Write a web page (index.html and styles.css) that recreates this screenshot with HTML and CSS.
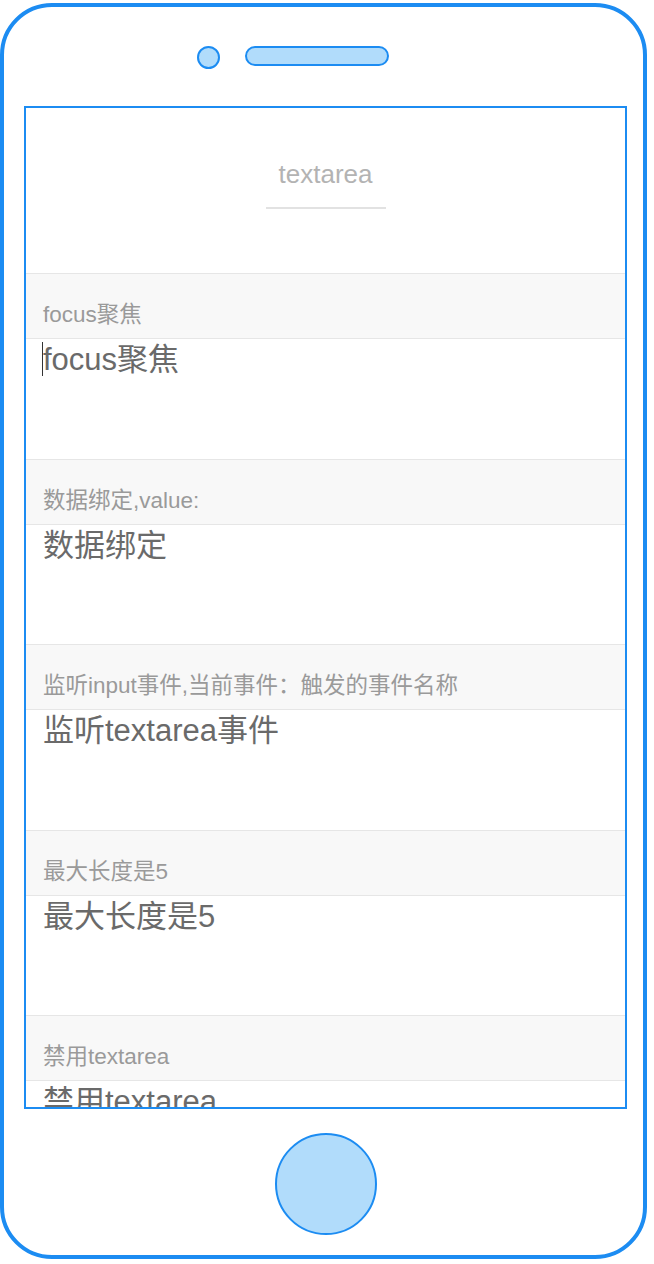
FILE: index.html
```html
<!DOCTYPE html>
<html lang="zh-CN">
<head>
<meta charset="utf-8">
<title>textarea</title>
<link rel="stylesheet" href="styles.css">
</head>
<body>
<div class="phone">
  <div class="top">
    <div class="camera"></div>
    <div class="speaker"></div>
  </div>
  <div class="screen">
    <div class="header">
      <div class="title">textarea</div>
    </div>
    <div class="section">
      <div class="label">focus聚焦</div>
      <div class="area"><span class="cursor"></span>focus聚焦</div>
    </div>
    <div class="section">
      <div class="label">数据绑定,value:</div>
      <div class="area">数据绑定</div>
    </div>
    <div class="section">
      <div class="label">监听input事件,当前事件：触发的事件名称</div>
      <div class="area">监听textarea事件</div>
    </div>
    <div class="section">
      <div class="label">最大长度是5</div>
      <div class="area">最大长度是5</div>
    </div>
    <div class="section">
      <div class="label">禁用textarea</div>
      <div class="area">禁用textarea</div>
    </div>
  </div>
  <div class="home"></div>
</div>
</body>
</html>
```
FILE: styles.css
```css
html, body {
  margin: 0;
  padding: 0;
  background: #ffffff;
}
body {
  font-family: "Liberation Sans", "Noto Sans CJK SC", sans-serif;
}
.phone {
  box-sizing: border-box;
  width: 647px;
  height: 1256px;
  margin-top: 3px;
  border: 4px solid #1c8cf2;
  border-radius: 52px;
  display: flex;
  flex-direction: column;
  align-items: flex-start;
}
.top {
  display: flex;
  align-items: flex-start;
  margin-top: 39px;
  margin-left: 193px;
  gap: 25px;
}
.camera {
  box-sizing: border-box;
  width: 23px;
  height: 23px;
  border-radius: 50%;
  border: 2px solid #1c8cf2;
  background: #b1dcfb;
}
.speaker {
  box-sizing: border-box;
  width: 144px;
  height: 20px;
  border-radius: 10px;
  border: 2px solid #1c8cf2;
  background: #b1dcfb;
}
.screen {
  box-sizing: border-box;
  width: 603px;
  height: 1003px;
  margin-top: 37px;
  margin-left: 20px;
  border: 2px solid #1c8cf2;
  overflow: hidden;
  background: #fff;
}
.header {
  display: flex;
  justify-content: center;
  padding: 48px 0 64px;
}
.title {
  width: 120px;
  text-align: center;
  font-size: 26px;
  line-height: 36px;
  color: #b3b3b3;
  padding-bottom: 15px;
  border-bottom: 2px solid #e2e2e2;
}
.section {
  display: flex;
  flex-direction: column;
}
.label {
  background: #f8f8f8;
  border-top: 1px solid #e6e6e6;
  border-bottom: 1px solid #e6e6e6;
  padding: 26px 17px 8px;
  font-size: 22.5px;
  line-height: 30px;
  color: #9a9a9a;
  white-space: nowrap;
}
.section:first-of-type .label {
  border-top-color: #f8f8f8;
}
.area {
  position: relative;
  height: 119.5px;
  box-sizing: border-box;
  padding: 4px 17px 0;
  font-size: 31px;
  line-height: 34px;
  color: #6a6a6a;
}
.cursor {
  position: absolute;
  left: 16px;
  top: 3px;
  width: 1px;
  height: 34px;
  background: #333;
}
.home {
  box-sizing: border-box;
  width: 102px;
  height: 102px;
  margin-top: 24px;
  margin-left: 271px;
  border-radius: 50%;
  border: 2px solid #1c8cf2;
  background: #b1dcfb;
}
```
